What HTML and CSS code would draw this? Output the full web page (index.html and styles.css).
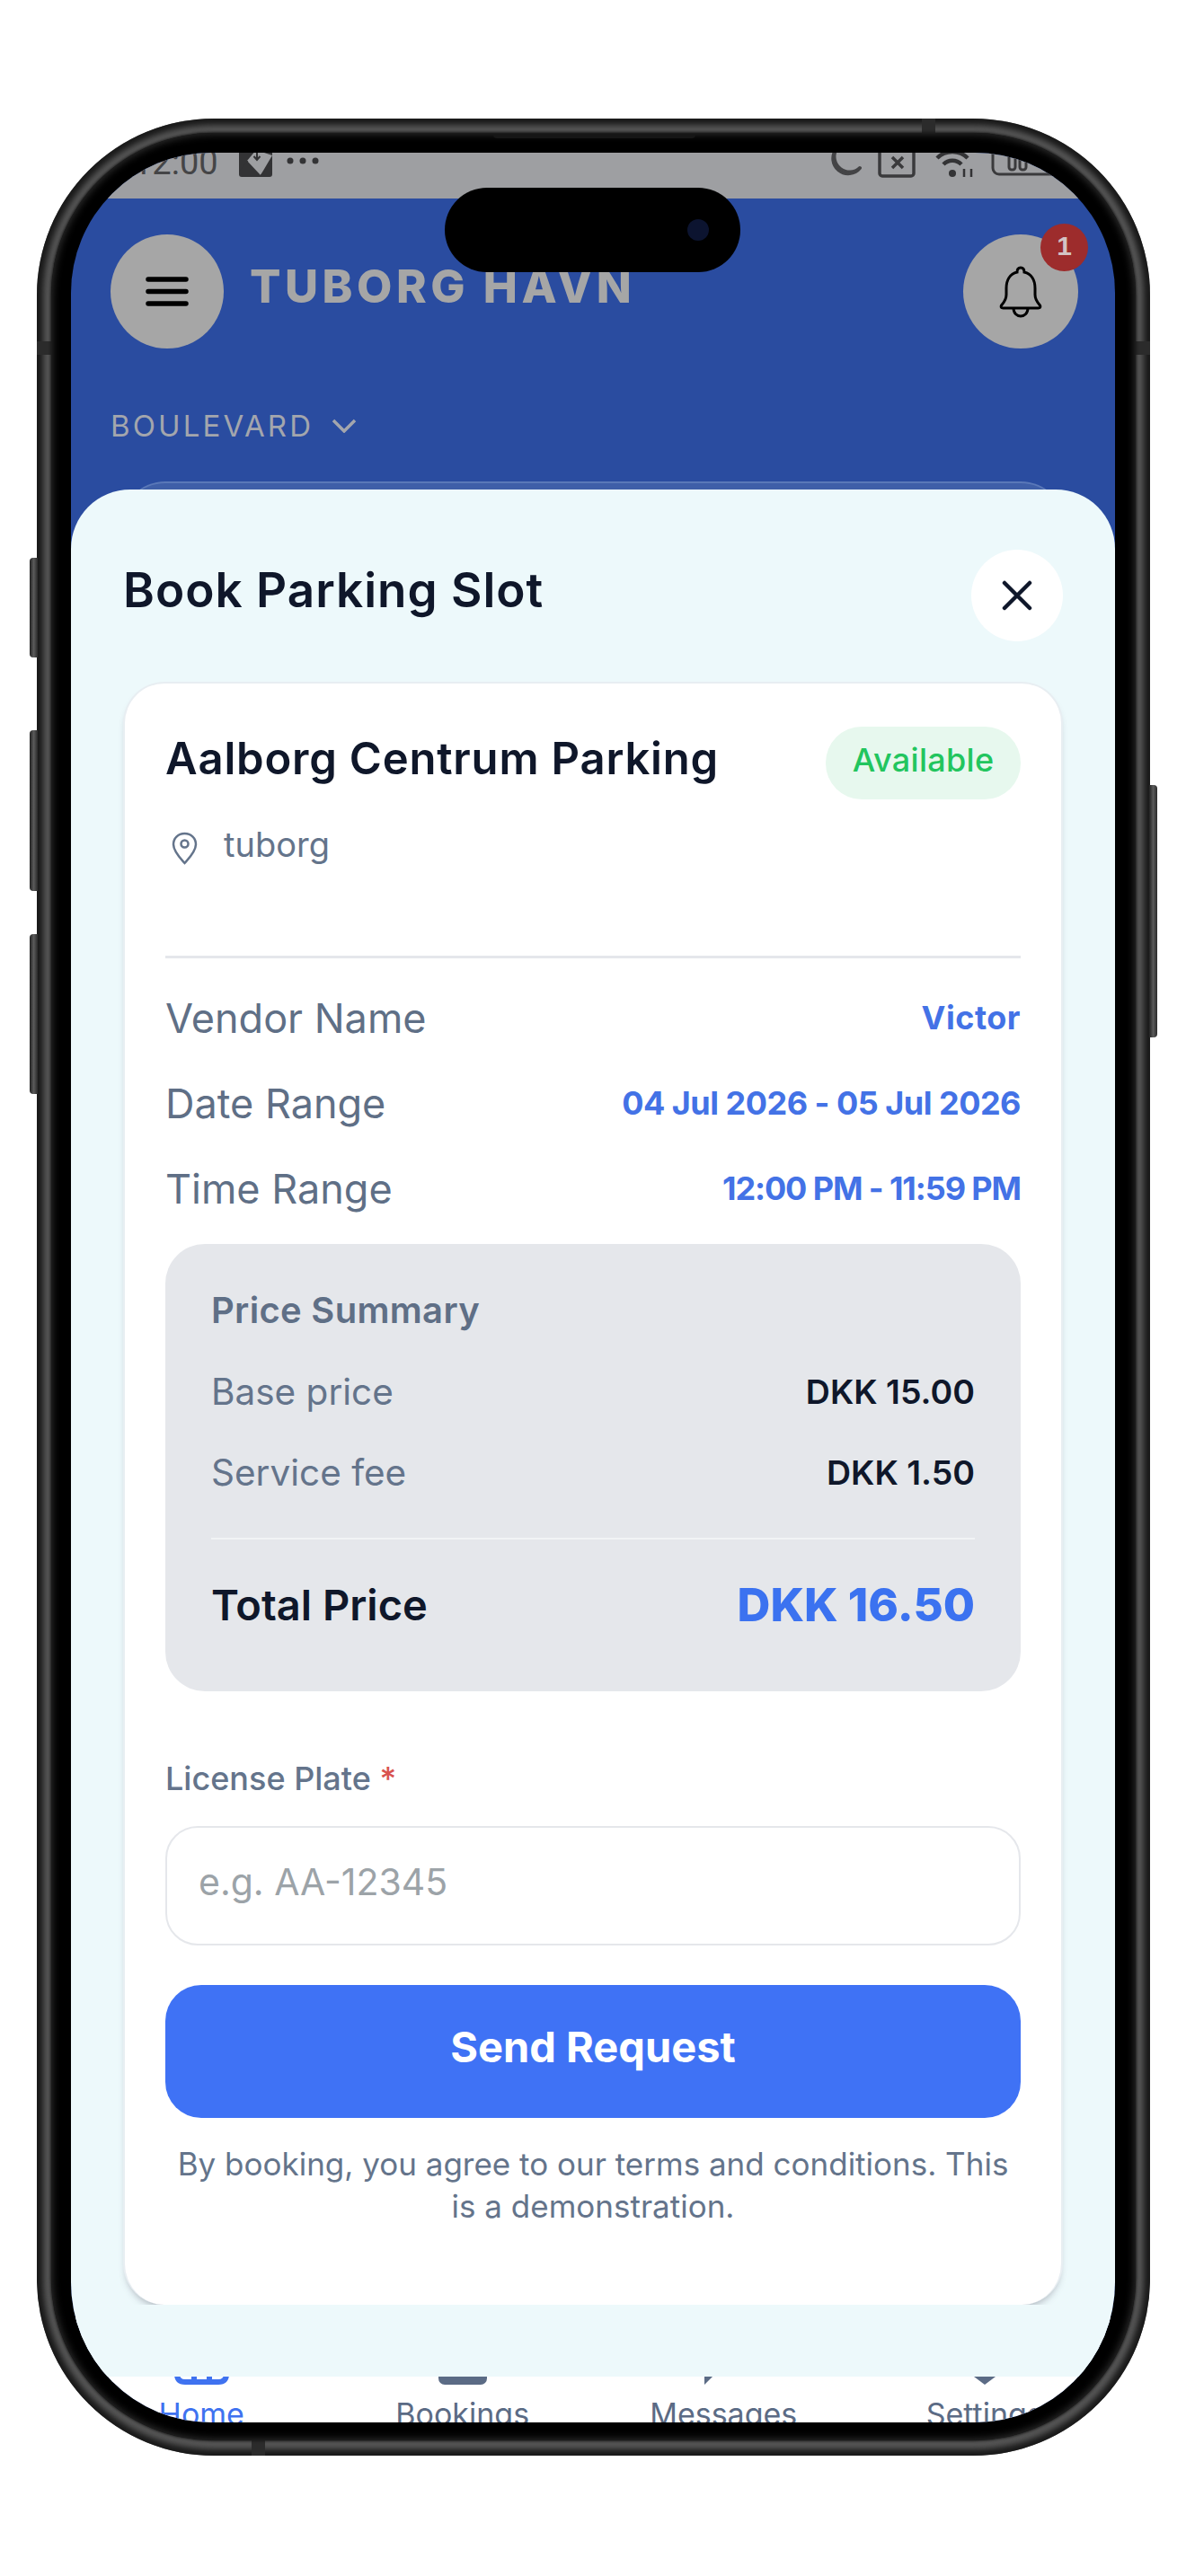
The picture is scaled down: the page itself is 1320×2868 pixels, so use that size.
FILE: index.html
```html
<!DOCTYPE html>
<html lang="en">
<head>
    <meta charset="UTF-8">
    <meta name="viewport" content="width=device-width, initial-scale=1.0">
    <title>Book Parking Slot</title>
    <link rel="stylesheet" href="styles.css">
</head>
<body>
    <div class="phone">
        <span class="side-btn side-mute"></span>
        <span class="side-btn side-up"></span>
        <span class="side-btn side-down"></span>
        <span class="side-btn side-power"></span>
        <span class="band band-top"></span>
        <span class="band band-bottom"></span>
        <span class="band band-left"></span>
        <span class="band band-right"></span>

        <div class="bezel">
            <span class="speaker"></span>
            <div class="screen">
                <div class="status-bar">
                    <div class="status-left">
                        <span class="status-time">12:00</span>
                        <svg class="status-photo" width="37" height="30" viewBox="0 0 37 30">
                            <rect width="37" height="30" rx="3" fill="#333335"/>
                            <path d="M19 0 L37 6 L24 28 L9 12z" fill="#9e9fa2"/>
                            <path d="M10 12 L0 24 M24 28 L37 14" stroke="#333335" stroke-width="1"/>
                            <path d="M20 2 V10 M16.500 7 L20 11 L23.500 7" fill="none" stroke="#333335" stroke-width="2"/>
                        </svg>
                        <svg class="status-dots" width="36" height="8" viewBox="0 0 36 8">
                            <circle cx="4" cy="4" r="3.500" fill="#333335"/>
                            <circle cx="18" cy="4" r="3.500" fill="#333335"/>
                            <circle cx="32" cy="4" r="3.500" fill="#333335"/>
                        </svg>
                    </div>
                    <div class="status-right">
                        <svg width="36" height="30" viewBox="0 0 36 30">
                            <path d="M8 -2 A15 15 0 1 0 34 19" fill="none" stroke="#444446" stroke-width="4" stroke-linecap="round"/>
                            <path d="M8 -2 A17 17 0 0 0 34 19" fill="none" stroke="#444446" stroke-width="3"/>
                        </svg>
                        <svg width="42" height="30" viewBox="0 0 42 30">
                            <rect x="2" y="-8" width="38" height="36" rx="3" fill="none" stroke="#3a3a3c" stroke-width="3.500"/>
                            <path d="M16 7 L28 19 M28 7 L16 19" stroke="#3a3a3c" stroke-width="3.500"/>
                        </svg>
                        <svg width="48" height="30" viewBox="0 0 48 30">
                            <path d="M13 15 A14 14 0 0 1 33 15 M6 8 A24 24 0 0 1 40 8" fill="none" stroke="#333335" stroke-width="4.500"/>
                            <circle cx="23" cy="25" r="4" fill="#333335"/>
                            <path d="M36 20 V29 M44 20 V29" stroke="#333335" stroke-width="2.500"/>
                        </svg>
                        <svg width="77" height="30" viewBox="0 0 77 30">
                            <rect x="2" y="-8" width="73" height="34" rx="7" fill="none" stroke="#3a3a3c" stroke-width="3"/>
                            <rect x="20" y="3" width="7" height="18" rx="3" fill="none" stroke="#3a3a3c" stroke-width="3"/>
                            <rect x="32" y="3" width="7" height="18" rx="3" fill="none" stroke="#3a3a3c" stroke-width="3"/>
                        </svg>
                    </div>
                </div>

                <div class="app-main">
                    <div class="topbar">
                        <button class="round-btn menu-btn" type="button">
                            <svg width="48" height="33" viewBox="0 0 48 33">
                                <path d="M3 3 H45 M3 16.500 H45 M3 30 H45" stroke="#000" stroke-width="5.500" stroke-linecap="round"/>
                            </svg>
                        </button>
                        <div class="brand">TUBORG HAVN</div>
                        <button class="round-btn bell-btn" type="button">
                            <svg width="48" height="58" viewBox="0 0 48 58">
                                <path d="M24 2 c-2.500 0-4 2-4 5 C12 9 8 16 8 25 v7 c0 6-3 9-5.500 12 q-1.500 3 2 3 h39 q3.500 0 2-3 C43 41 40 38 40 32 v-7 c0-9-4-16-12-18 c0-3-1.500-5-4-5z" fill="none" stroke="#000" stroke-width="3"/>
                                <path d="M16 47 c0 6 4 9 8 9 s8-3 8-9" fill="none" stroke="#000" stroke-width="3"/>
                            </svg>
                            <span class="bell-count">1</span>
                        </button>
                    </div>
                    <div class="area-select">
                        <span>BOULEVARD</span>
                        <svg width="28" height="16" viewBox="0 0 28 16">
                            <path d="M2 2 L14 14 L26 2" fill="none" stroke="#a3a6ad" stroke-width="3.500"/>
                        </svg>
                    </div>
                    <div class="peek-card"></div>
                </div>

                <nav class="bottom-nav">
                    <div class="nav-item active">
                        <svg width="63" height="60" viewBox="0 0 63 60">
                            <path d="M4 28 L31.500 4 L59 28 V48 Q59 57 50 57 H13 Q4 57 4 48z M23 57 V40 H40 V57" fill="none" stroke="#3f72f0" stroke-width="6"/>
                        </svg>
                        <span>Home</span>
                    </div>
                    <div class="nav-item">
                        <svg width="54" height="55" viewBox="0 0 54 55">
                            <rect x="0" y="6" width="54" height="49" rx="7" fill="#5b6b85"/>
                        </svg>
                        <span>Bookings</span>
                    </div>
                    <div class="nav-item">
                        <svg width="60" height="57" viewBox="0 0 60 57">
                            <path d="M8 0 H52 Q60 0 60 8 V38 Q60 46 52 46 H20 L9 57 V46 H8 Q0 46 0 38 V8 Q0 0 8 0z" fill="#5b6b85"/>
                        </svg>
                        <span>Messages</span>
                    </div>
                    <div class="nav-item">
                        <svg width="56" height="57" viewBox="0 0 56 57">
                            <path d="M28 57 L0 36 V0 H56 V36z" fill="#5b6b85"/>
                        </svg>
                        <span>Settings</span>
                    </div>
                </nav>

                <div class="island"><span class="island-cam"></span></div>

                <div class="sheet">
                    <div class="sheet-head">
                        <h1>Book Parking Slot</h1>
                        <button class="close-btn" type="button">
                            <svg width="34" height="34" viewBox="0 0 34 34">
                                <path d="M3 3 L31 31 M31 3 L3 31" stroke="#0f172a" stroke-width="4.500" stroke-linecap="round"/>
                            </svg>
                        </button>
                    </div>

                    <div class="card-clip">
                        <div class="card">
                            <div class="card-head">
                                <h2>Aalborg Centrum Parking</h2>
                                <span class="badge">Available</span>
                            </div>
                            <div class="location">
                                <svg width="29" height="37" viewBox="0 0 29 37">
                                    <path d="M14.500 2 C7 2 2 7.500 2 14 c0 8 8 16 12.500 21 C19 30 27 22 27 14 C27 7.500 22 2 14.500 2z" fill="none" stroke="#64748b" stroke-width="2.500"/>
                                    <circle cx="14.500" cy="13.500" r="4" fill="none" stroke="#64748b" stroke-width="2.500"/>
                                </svg>
                                <span>tuborg</span>
                            </div>
                            <div class="card-divider"></div>

                            <div class="info-row"><span>Vendor Name</span><strong class="val-name">Victor</strong></div>
                            <div class="info-row"><span>Date Range</span><strong class="val-date">04 Jul 2026 - 05 Jul 2026</strong></div>
                            <div class="info-row"><span>Time Range</span><strong class="val-time">12:00 PM - 11:59 PM</strong></div>

                            <div class="price-box">
                                <div class="price-title">Price Summary</div>
                                <div class="price-row"><span>Base price</span><strong>DKK 15.00</strong></div>
                                <div class="price-row"><span>Service fee</span><strong>DKK 1.50</strong></div>
                                <div class="price-divider"></div>
                                <div class="price-total"><span>Total Price</span><strong>DKK 16.50</strong></div>
                            </div>

                            <label class="field-label" for="plate">License Plate <em>*</em></label>
                            <input class="field-input" type="text" id="plate" placeholder="e.g. AA-12345">
                            <button class="send-btn" type="button">Send Request</button>
                            <p class="terms">By booking, you agree to our terms and conditions. This is a demonstration.</p>
                        </div>
                    </div>
                </div>
            </div>
        </div>
    </div>
</body>
</html>
```

FILE: styles.css
```css
* {
    box-sizing: border-box;
}

body {
    margin: 0;
    background-color: #fff;
    font-family: Inter, "Noto Sans", sans-serif;
    color: #0f172a;
}

.phone {
    position: relative;
    width: 1239px;
    height: 2602px;
    margin: 132px 0 0 41px;
    padding: 16px 16px 17px;
    border-radius: 197px;
    background-color: #555;
    box-shadow: inset 0 0 6px 7px #1a1a1a;
}

.side-btn {
    position: absolute;
    width: 9px;
    border-radius: 4px 0 0 4px;
    background: linear-gradient(to right, #222, #5a5a5a 50%, #2a2a2a);
}

.side-mute {
    left: -8px;
    top: 489px;
    height: 111px;
}

.side-up {
    left: -8px;
    top: 681px;
    height: 179px;
}

.side-down {
    left: -8px;
    top: 908px;
    height: 178px;
}

.side-power {
    right: -8px;
    top: 742px;
    height: 281px;
    border-radius: 0 4px 4px 0;
}

/* antenna breaks in the metal rim */
.band {
    position: absolute;
    background-color: #2b2b2b;
}

.band-top {
    top: 0;
    left: 985px;
    width: 15px;
    height: 16px;
}

.band-bottom {
    bottom: 0;
    left: 239px;
    width: 15px;
    height: 17px;
}

.band-left {
    top: 248px;
    left: 0;
    width: 16px;
    height: 15px;
}

.band-right {
    top: 248px;
    right: 0;
    width: 16px;
    height: 15px;
}

.bezel {
    position: relative;
    height: 100%;
    padding: 22px 23px 20px 22px;
    border-radius: 181px;
    background-color: #000;
    box-shadow: 0 0 3px 1px #1a1a1a, inset 0 0 10px 1px #333;
}

.speaker {
    position: absolute;
    top: 1px;
    left: 492px;
    width: 225px;
    height: 5px;
    border-radius: 0 0 4px 4px;
    background-color: #161616;
}

.screen {
    position: relative;
    display: flex;
    flex-direction: column;
    height: 100%;
    overflow: hidden;
    border-radius: 156px;
    background-color: #2a4ca0;
}

/* status bar, only its lower part shows */
.status-bar {
    display: flex;
    flex: none;
    justify-content: space-between;
    align-items: flex-end;
    height: 51px;
    padding: 0 61px 21px 69px;
    background-color: #9e9fa2;
}

.status-left,
.status-right {
    display: flex;
    align-items: flex-end;
}

.status-time {
    margin-right: 23px;
    font-family: Roboto, sans-serif;
    font-size: 38px;
    line-height: 38px;
    color: #454547;
}

.status-photo {
    margin-bottom: 3px;
}

.status-dots {
    margin: 0 0 17px 16px;
}

.status-right {
    gap: 18px;
}

.status-right svg {
    margin-bottom: 2px;
}

.app-main {
    flex: 1;
    padding-top: 40px;
}

.topbar {
    display: flex;
    align-items: center;
    padding: 0 41px 0 44px;
}

.round-btn {
    display: flex;
    justify-content: center;
    align-items: center;
    position: relative;
    flex: none;
    height: 127px;
    padding: 0;
    border: none;
    border-radius: 50%;
    background-color: #a6a6a6;
}

.menu-btn {
    width: 126px;
}

.bell-btn {
    width: 128px;
    margin-left: auto;
}

.bell-count {
    position: absolute;
    top: -12px;
    right: -11px;
    width: 53px;
    height: 53px;
    border-radius: 50%;
    background-color: #9d2c2c;
    color: #d3c3c3;
    font-size: 30px;
    font-weight: 700;
    line-height: 50px;
    text-align: center;
}

.brand {
    margin: 0 0 12px 29px;
    font-size: 51px;
    font-weight: 800;
    letter-spacing: 4.5px;
    color: #a6a6a6;
}

.area-select {
    display: flex;
    align-items: center;
    gap: 20px;
    height: 44px;
    margin: 64px 0 0 44px;
    font-size: 33px;
    letter-spacing: 3.1px;
    color: #a3a6ad;
}

.peek-card {
    height: 120px;
    margin: 40px 55px 0;
    border-top: 2px solid #5a78b8;
    border-radius: 50px 50px 0 0;
    background-color: #3f5fa8;
}

.bottom-nav {
    display: grid;
    flex: none;
    grid-template-columns: repeat(4, 1fr);
    height: 117px;
    overflow: hidden;
    background-color: #fff;
}

.nav-item {
    display: flex;
    flex-direction: column;
    justify-content: flex-end;
    align-items: center;
    height: 130px;
    font-size: 34px;
    line-height: 44px;
    color: #5b6b85;
}

.nav-item svg {
    margin-bottom: 11px;
}

.nav-item.active {
    color: #3f72f0;
}

.island {
    position: absolute;
    top: 39px;
    left: 416px;
    width: 329px;
    height: 94px;
    border-radius: 47px;
    background-color: #000;
}

.island-cam {
    position: absolute;
    top: 35px;
    right: 35px;
    width: 24px;
    height: 24px;
    border-radius: 50%;
    background-color: #0c1430;
}

/* booking sheet over the dimmed page */
.sheet {
    position: absolute;
    top: 375px;
    left: 0;
    right: 0;
    display: flex;
    flex-direction: column;
    height: 2101px;
    padding: 67px 58px 80px;
    border-radius: 66px 66px 0 0;
    background-color: #edf9fb;
}

.sheet-head {
    display: flex;
    justify-content: space-between;
    align-items: center;
    margin-bottom: 45px;
}

.sheet-head h1 {
    margin: 0 0 12px;
    font-size: 53px;
    font-weight: 600;
    letter-spacing: 1px;
    line-height: 60px;
}

.close-btn {
    display: flex;
    justify-content: center;
    align-items: center;
    width: 102px;
    height: 102px;
    padding: 0;
    border: none;
    border-radius: 50%;
    background-color: #fff;
}

.card-clip {
    flex: 1;
    margin: 0 -20px;
    padding: 0 20px;
    overflow: hidden;
}

.card {
    height: 100%;
    padding: 48px 45px 0;
    border: 2px solid #e8eef2;
    border-bottom: none;
    border-radius: 46px;
    background-color: #fff;
    box-shadow: 0 6px 8px -4px rgba(60, 60, 80, 0.4);
}

.card-head {
    display: flex;
    justify-content: space-between;
    align-items: center;
}

.card-head h2 {
    margin: 0 0 10px;
    font-size: 49px;
    font-weight: 600;
    letter-spacing: 0.8px;
}

.badge {
    width: 217px;
    height: 81px;
    border-radius: 40px;
    background-color: #e7f8ee;
    color: #22c55e;
    font-size: 36px;
    font-weight: 500;
    letter-spacing: 0.3px;
    line-height: 75px;
    text-align: center;
}

.location {
    display: flex;
    align-items: center;
    gap: 29px;
    height: 48px;
    margin: 30px 0 0 7px;
    font-size: 38px;
    color: #64748b;
}

.location span {
    margin-bottom: 8px;
}

.card-divider {
    height: 3px;
    margin-top: 96px;
    background-color: #e5e7eb;
}

.info-row {
    display: flex;
    justify-content: space-between;
    align-items: center;
    height: 52px;
    margin-top: 43px;
    font-size: 45px;
    color: #5f6f86;
}

.card-divider + .info-row {
    margin-top: 40px;
}

.info-row strong {
    font-size: 36px;
    font-weight: 700;
    color: #4372e6;
}

.info-row .val-name {
    letter-spacing: 0.5px;
}

.info-row .val-date {
    letter-spacing: -0.5px;
}

.info-row .val-time {
    letter-spacing: -1.1px;
}

.price-box {
    height: 498px;
    margin-top: 36px;
    padding: 52px 51px 0;
    border-radius: 44px;
    background-color: #e5e7eb;
}

.price-title {
    font-size: 40px;
    font-weight: 600;
    letter-spacing: 0.3px;
    line-height: 44px;
    color: #5f6f86;
}

.price-row {
    display: flex;
    justify-content: space-between;
    align-items: center;
    height: 44px;
    margin-top: 46px;
    font-size: 40.5px;
    color: #64748b;
}

.price-row strong {
    font-size: 37.5px;
    font-weight: 600;
    color: #0f172a;
}

.price-divider {
    height: 2px;
    margin-top: 51px;
    background-color: #f1f3f5;
}

.price-total {
    display: flex;
    justify-content: space-between;
    align-items: center;
    height: 60px;
    margin-top: 42px;
    font-size: 47px;
    font-weight: 600;
}

.price-total strong {
    font-size: 51px;
    font-weight: 800;
    color: #3b72f0;
}

.field-label {
    display: block;
    margin-top: 75px;
    font-size: 36px;
    font-weight: 500;
    line-height: 44px;
    color: #64748b;
}

.field-label em {
    font-style: normal;
    color: #d9534f;
}

.field-input {
    display: block;
    width: 100%;
    height: 133px;
    margin-top: 31px;
    padding: 0 35px 9px;
    border: 2px solid #e5e7eb;
    border-radius: 36px;
    background-color: #fff;
    font-family: inherit;
    font-size: 41px;
}

.field-input::placeholder {
    color: #9ca3a8;
}

.send-btn {
    display: block;
    width: 100%;
    height: 148px;
    margin-top: 44px;
    padding-bottom: 13px;
    border: none;
    border-radius: 40px;
    background-color: #3f72f5;
    color: #fff;
    font-family: inherit;
    font-size: 47px;
    font-weight: 700;
}

.terms {
    margin: 28px 0 0;
    padding: 0 10px;
    font-size: 35px;
    line-height: 47px;
    text-align: center;
    color: #64748b;
}
```
